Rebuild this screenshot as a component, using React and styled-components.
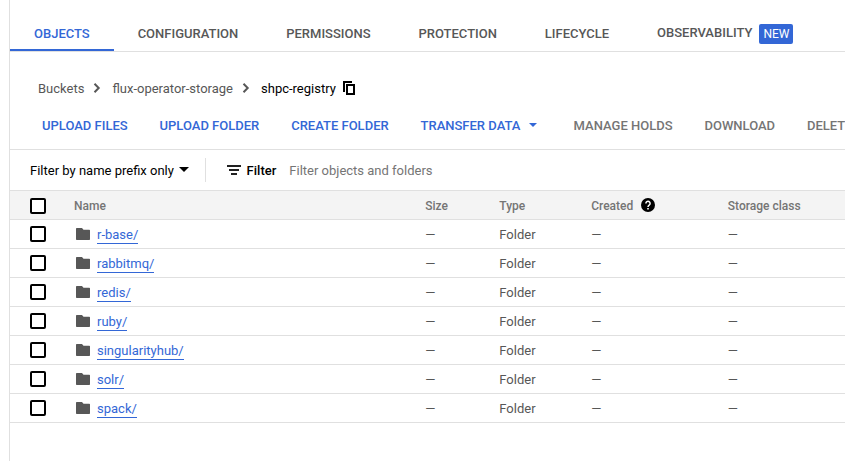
import React from 'react';
import styled, { createGlobalStyle, css } from 'styled-components';

const BLUE = '#3367d6';
const LINE = '#e0e0e0';

const GlobalStyle = createGlobalStyle`
  * { box-sizing: border-box; }
  body {
    margin: 0;
    background: #fff;
    color: #575757;
    font: 400 13px/20px Roboto, sans-serif;
    overflow: hidden;
  }
`;

const Page = styled.main`
  height: 461px;
  margin-left: 9px;
  border-left: 1px solid ${LINE};
  overflow: hidden;
`;

const Tabs = styled.nav`
  display: flex;
  height: 52px;
  border-bottom: 1px solid ${LINE};
  white-space: nowrap;
`;

const Tab = styled.a`
  display: flex;
  height: 51px;
  padding: 24px 23.9px 0 24px;
  font-weight: 500;
  color: ${(p) => (p.$active ? BLUE : '#575757')};
  border-bottom: 2px solid ${(p) => (p.$active ? BLUE : 'transparent')};
`;

const BadgedLabel = styled.span`
  margin-top: -1px;
`;

const Badge = styled.span`
  height: 20px;
  margin-left: 7px;
  padding: 0 4px;
  border-radius: 2px;
  background: ${BLUE};
  color: #fff;
  font-size: 12px;
  font-weight: 400;
`;

const Breadcrumbs = styled.nav`
  display: flex;
  align-items: center;
  height: 57px;
  padding: 17px 0 0 28px;
`;

const Crumb = styled.span`
  color: ${(p) => (p.$current ? '#000' : '#575757')};
`;

const Chevron = styled.svg`
  width: 8px;
  height: 10px;
  margin: -2px 11px 0 9px;
`;

const CopyIcon = styled.svg`
  width: 12px;
  height: 14px;
  margin: -2px 0 0 7px;
`;

const Actions = styled.div`
  display: flex;
  gap: 31.9px;
  height: 41px;
  padding: 7px 0 0 32px;
  border-bottom: 1px solid ${LINE};
  white-space: nowrap;
`;

const Action = styled.button`
  display: flex;
  align-items: center;
  flex: none;
  height: 20px;
  padding: 0;
  border: 0;
  background: none;
  font: 500 13px/20px Roboto, sans-serif;
  color: ${(p) => (p.$muted ? '#757575' : BLUE)};
`;

const Caret = styled.svg`
  width: ${(p) => p.$w}px;
  height: ${(p) => p.$w / 2}px;
  margin: ${(p) => p.$lift || -1}px ${(p) => p.$after || 0}px 0 ${(p) => p.$gap}px;
`;

const FilterBar = styled.div`
  display: flex;
  align-items: center;
  height: 41px;
  padding-left: 20px;
  border-bottom: 1px solid ${LINE};
  color: #000;
`;

const PrefixSelect = styled.div`
  display: flex;
  align-items: center;
  width: 176px;
  height: 24px;
  border-right: 1px solid ${LINE};
`;

const PrefixLabel = styled.span`
  padding-top: 1px;
`;

const FilterIcon = styled.svg`
  width: 14px;
  height: 10px;
  margin: 0 5.6px 0 21px;
`;

const FilterLabel = styled.span`
  font-weight: 500;
  padding-top: 1px;
  margin-right: 13px;
`;

const Placeholder = styled.span`
  padding-top: 1px;
  color: #757575;
`;

const Table = styled.div`
  display: grid;
`;

const Row = styled.div`
  display: grid;
  grid-template-columns: 64px 351.2px 74.1px 91.9px 136.6px 1fr;
  align-items: center;
  height: 29px;
  border-bottom: 1px solid ${LINE};
  ${(p) =>
    p.$head &&
    css`
      background: #f4f4f4;
      color: #757575;
      font-size: 12px;
      font-weight: 500;
      padding-top: 1px;
    `}
`;

const Cell = styled.div`
  display: flex;
  align-items: center;
  padding-top: ${(p) => (p.$value ? 1 : 0)}px;
`;

const Checkbox = styled.span`
  width: 16px;
  height: 16px;
  margin-left: 20px;
  border: 2px solid #000;
  border-radius: 2px;
  background: #fff;
`;

const FolderIcon = styled.svg`
  width: 14px;
  height: 12px;
  margin: 0 7px 0 2px;
`;

const ObjectLink = styled.a`
  color: ${BLUE};
  height: 18px;
  line-height: 18px;
  margin-top: 2px;
  border-bottom: 1px solid ${BLUE};
`;

const HelpIcon = styled.svg`
  width: 14px;
  height: 14px;
  margin: -2px 0 0 8px;
`;

const folders = ['r-base/', 'rabbitmq/', 'redis/', 'ruby/', 'singularityhub/', 'solr/', 'spack/'];

function Separator() {
  return (
    <Chevron viewBox="0 0 8 10">
      <path d="M1.5 .8 5.7 5 1.5 9.2" fill="none" stroke="#575757" strokeWidth="2" />
    </Chevron>
  );
}

function DownCaret({ width, gap, after, lift }) {
  return (
    <Caret $w={width} $gap={gap} $after={after} $lift={lift} viewBox="0 0 10 5">
      <path d="M0 0h10L5 5z" fill="currentColor" />
    </Caret>
  );
}

export default function App() {
  return (
    <>
      <GlobalStyle />
      <Page>
        <Tabs>
          <Tab $active>OBJECTS</Tab>
          <Tab>CONFIGURATION</Tab>
          <Tab>PERMISSIONS</Tab>
          <Tab>PROTECTION</Tab>
          <Tab>LIFECYCLE</Tab>
          <Tab>
            <BadgedLabel>OBSERVABILITY</BadgedLabel>
            <Badge>NEW</Badge>
          </Tab>
        </Tabs>
        <Breadcrumbs>
          <Crumb>Buckets</Crumb>
          <Separator />
          <Crumb>flux-operator-storage</Crumb>
          <Separator />
          <Crumb $current>shpc-registry</Crumb>
          <CopyIcon viewBox="0 0 12 14">
            <path d="M9 0H0v11h2V2h7zM3 3v11h9V3zm2 2h5v7H5z" fill="#000" fillRule="evenodd" />
          </CopyIcon>
        </Breadcrumbs>
        <Actions>
          <Action>UPLOAD FILES</Action>
          <Action>UPLOAD FOLDER</Action>
          <Action>CREATE FOLDER</Action>
          <Action>
            TRANSFER DATA
            <DownCaret width={8} gap={8.3} after={5} lift={-2} />
          </Action>
          <Action $muted>MANAGE HOLDS</Action>
          <Action $muted>DOWNLOAD</Action>
          <Action $muted>DELETE</Action>
        </Actions>
        <FilterBar>
          <PrefixSelect>
            <PrefixLabel>Filter by name prefix only</PrefixLabel>
            <DownCaret width={10} gap={5} />
          </PrefixSelect>
          <FilterIcon viewBox="0 0 14 10">
            <path d="M0 0h14v2H0zM2 4h10v2H2zM4 8h6v2H4z" fill="#212121" />
          </FilterIcon>
          <FilterLabel>Filter</FilterLabel>
          <Placeholder>Filter objects and folders</Placeholder>
        </FilterBar>
        <Table>
          <Row $head>
            <Cell><Checkbox /></Cell>
            <Cell>Name</Cell>
            <Cell>Size</Cell>
            <Cell>Type</Cell>
            <Cell>
              Created
              <HelpIcon viewBox="0 0 14 14">
                <circle cx="7" cy="7" r="7" fill="#000" />
                <path d="M4.9 5.4a2.1 2.1 0 1 1 3.4 1.6C7.5 7.6 7 7.9 7 8.9" fill="none" stroke="#fff" strokeWidth="1.5" />
                <path d="M6.2 10h1.6v1.6H6.2z" fill="#fff" />
              </HelpIcon>
            </Cell>
            <Cell>Storage class</Cell>
          </Row>
          {folders.map((name) => (
            <Row key={name}>
              <Cell><Checkbox /></Cell>
              <Cell>
                <FolderIcon viewBox="0 0 14 12">
                  <path d="M.7 0H6l1.5 1.7h5.8a.7.7 0 0 1 .7.7v8.9a.7.7 0 0 1-.7.7H.7a.7.7 0 0 1-.7-.7V.7A.7.7 0 0 1 .7 0z" fill="#575757" />
                </FolderIcon>
                <ObjectLink>{name}</ObjectLink>
              </Cell>
              <Cell $value>—</Cell>
              <Cell $value>Folder</Cell>
              <Cell $value>—</Cell>
              <Cell $value>—</Cell>
            </Row>
          ))}
        </Table>
      </Page>
    </>
  );
}
